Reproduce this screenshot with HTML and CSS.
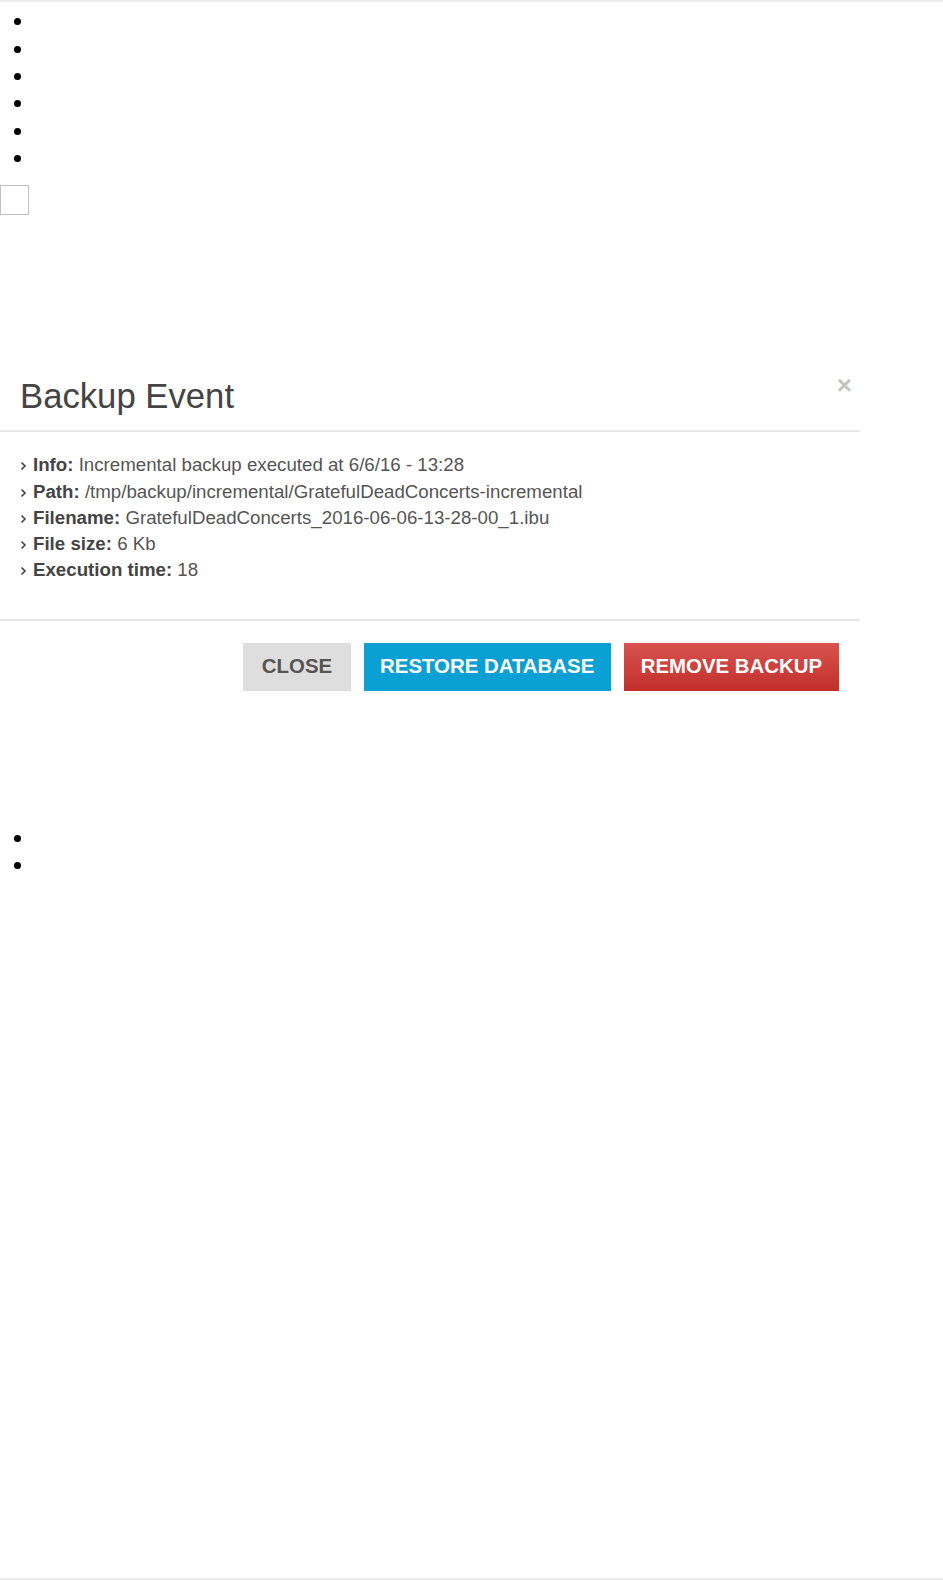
FILE: index.html
```html
<!DOCTYPE html>
<html lang="en">
<head>
<meta charset="utf-8">
<title>Backup Event</title>
<link rel="stylesheet" href="styles.css">
</head>
<body>
<div class="page">
  <ul class="dots dots-top">
    <li></li><li></li><li></li><li></li><li></li><li></li>
  </ul>
  <div class="box"></div>

  <div class="modal">
    <div class="modal-header">
      <h4 class="modal-title">Backup Event</h4>
      <span class="close">&times;</span>
    </div>
    <div class="modal-body">
      <div class="row"><svg class="chev" width="7" height="10" viewBox="0 0 7 10"><polyline points="1.5,1.5 5,5 1.5,8.5" fill="none" stroke="#444" stroke-width="1.6"/></svg><b>Info:</b> Incremental backup executed at 6/6/16 - 13:28</div>
      <div class="row"><svg class="chev" width="7" height="10" viewBox="0 0 7 10"><polyline points="1.5,1.5 5,5 1.5,8.5" fill="none" stroke="#444" stroke-width="1.6"/></svg><b>Path:</b> /tmp/backup/incremental/GratefulDeadConcerts-incremental</div>
      <div class="row"><svg class="chev" width="7" height="10" viewBox="0 0 7 10"><polyline points="1.5,1.5 5,5 1.5,8.5" fill="none" stroke="#444" stroke-width="1.6"/></svg><b>Filename:</b> GratefulDeadConcerts_2016-06-06-13-28-00_1.ibu</div>
      <div class="row"><svg class="chev" width="7" height="10" viewBox="0 0 7 10"><polyline points="1.5,1.5 5,5 1.5,8.5" fill="none" stroke="#444" stroke-width="1.6"/></svg><b>File size:</b> 6 Kb</div>
      <div class="row"><svg class="chev" width="7" height="10" viewBox="0 0 7 10"><polyline points="1.5,1.5 5,5 1.5,8.5" fill="none" stroke="#444" stroke-width="1.6"/></svg><b>Execution time:</b> 18</div>
    </div>
    <div class="modal-footer">
      <button class="btn btn-default">CLOSE</button>
      <button class="btn btn-info">RESTORE DATABASE</button>
      <button class="btn btn-danger">REMOVE BACKUP</button>
    </div>
  </div>

  <ul class="dots dots-bottom">
    <li></li><li></li>
  </ul>
</div>
</body>
</html>
```
FILE: styles.css
```css
* { box-sizing: border-box; }
html, body { margin: 0; padding: 0; background: #fff; }
body { font-family: "Liberation Sans", Arial, sans-serif; color: #555; }

.page {
  height: 1580px;
  border-top: 2px solid #ececec;
  border-bottom: 2px solid #ececec;
  overflow: hidden;
}

.dots {
  margin: 0;
  padding: 0;
  list-style: none;
}
.dots li {
  height: 27.4px;
  display: flex;
  align-items: center;
  padding-left: 13.5px;
}
.dots li::before {
  content: "";
  width: 7px;
  height: 7px;
  border-radius: 50%;
  background: #000;
}
.dots-top { margin-top: 6px; }

.box {
  width: 29px;
  height: 30px;
  border: 1px solid #c2c2c2;
  margin-top: 12.6px;
}

.modal {
  width: 860px;
  margin-top: 150px;
}

.modal-header {
  display: flex;
  justify-content: space-between;
  align-items: flex-start;
  padding: 13px 8px 16px 20px;
  border-bottom: 2px solid #e8e8e8;
}
.modal-title {
  margin: 0;
  font-size: 34.7px;
  line-height: 36px;
  font-weight: normal;
  color: #444;
}
.close {
  font-size: 26px;
  line-height: 20px;
  font-weight: bold;
  color: #c4c4c4;
  margin-top: -3px;
}

.modal-body {
  padding: 20.4px 20px 36px 20px;
  font-size: 18.7px;
  line-height: 26.2px;
  color: #555;
}
.row { white-space: nowrap; }
.row b { color: #444; }
.chev { margin-right: 6px; vertical-align: 0; }

.modal-footer {
  display: flex;
  justify-content: flex-end;
  gap: 13px;
  padding: 21.4px 21px 20px 0;
  border-top: 2px solid #e8e8e8;
}
.btn {
  height: 48px;
  border: none;
  padding: 0 17px;
  font-family: "Liberation Sans", Arial, sans-serif;
  font-size: 20.4px;
  font-weight: bold;
  border-radius: 0;
}
.btn-default { background: #dedede; color: #555; padding: 0 18.5px; }
.btn-info { background: #0ba0d4; color: #fff; padding: 0 16.5px; }
.btn-danger { background: linear-gradient(#d9534f, #c12f2b); color: #fff; }

.dots-bottom { margin-top: 114px; }
```
